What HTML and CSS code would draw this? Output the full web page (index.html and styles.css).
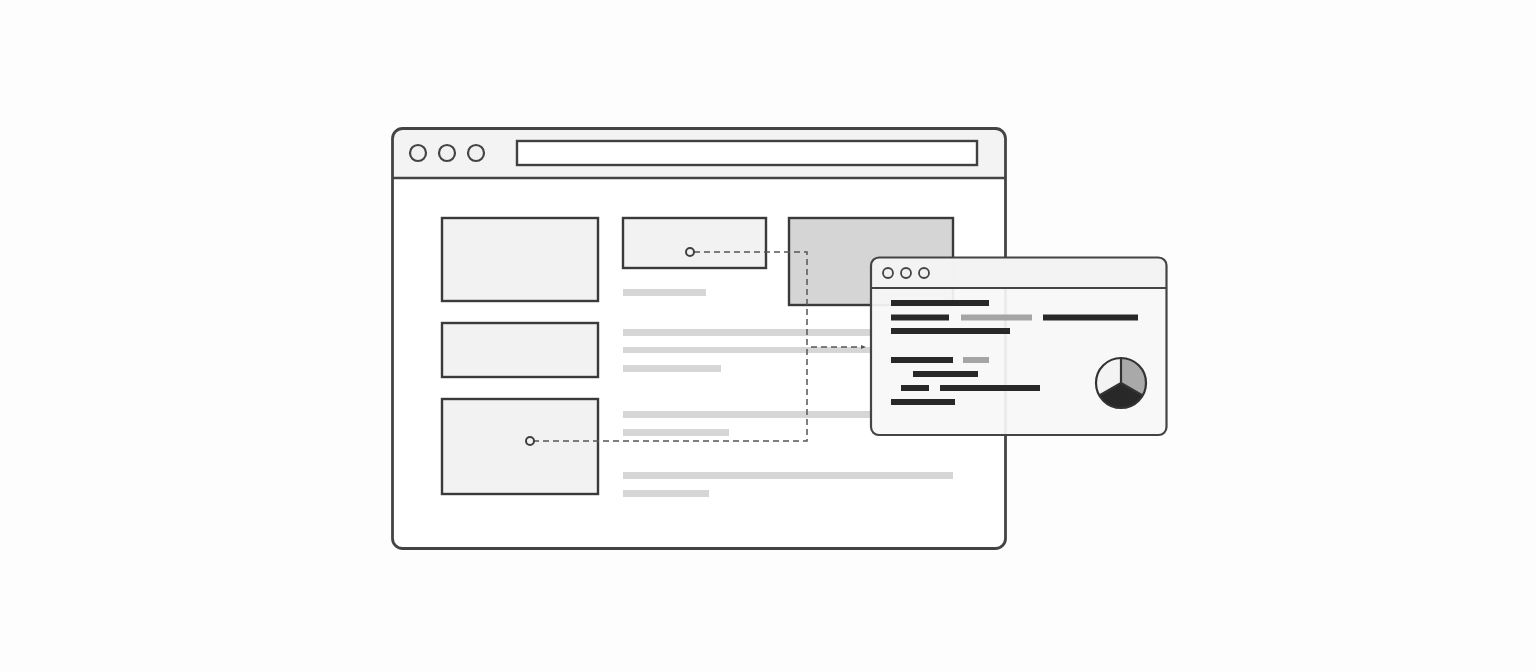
FILE: index.html
```html
<!DOCTYPE html>
<html lang="en">
<head>
<meta charset="utf-8">
<title>Wireframe illustration</title>
<link rel="stylesheet" href="styles.css">
</head>
<body>
<main class="stage">
<svg class="art" viewBox="0 0 1536 672" width="1536" height="672" xmlns="http://www.w3.org/2000/svg">
  <!-- main browser window -->
  <g class="win">
    <rect class="win-body" x="392.5" y="128.5" width="613" height="420" rx="10"/>
    <path class="win-bar" d="M402.5 128.5 H995.5 A10 10 0 0 1 1005.5 138.5 V178 H392.5 V138.5 A10 10 0 0 1 402.5 128.5 Z"/>
    <line class="win-line" x1="392.5" y1="178" x2="1005.5" y2="178"/>
    <rect class="win-outline" x="392.5" y="128.5" width="613" height="420" rx="10"/>
    <circle class="dot" cx="418" cy="153" r="8"/>
    <circle class="dot" cx="447" cy="153" r="8"/>
    <circle class="dot" cx="476" cy="153" r="8"/>
    <rect class="addr" x="517" y="141" width="460" height="24"/>

    <rect class="box" x="442" y="218" width="156" height="83"/>
    <rect class="box" x="442" y="323" width="156" height="54"/>
    <rect class="box" x="442" y="399" width="156" height="95"/>
    <rect class="box" x="623" y="218" width="143" height="50"/>
    <rect class="box box-dark" x="789" y="218" width="164" height="87"/>

    <rect class="gl" x="623" y="289" width="83" height="7"/>
    <rect class="gl" x="623" y="329" width="250" height="7"/>
    <rect class="gl" x="623" y="347" width="250" height="6"/>
    <rect class="gl" x="623" y="365" width="98" height="7"/>
    <rect class="gl" x="623" y="411" width="250" height="7"/>
    <rect class="gl" x="623" y="429" width="106" height="7"/>
    <rect class="gl" x="623" y="472" width="330" height="7"/>
    <rect class="gl" x="623" y="490" width="86" height="7"/>

    <path class="dash" d="M694 252 H807 V441 H534"/>
    <path class="dash" d="M811 347 H864"/>
    <path class="tip" d="M861 345 L866 347 L861 349 Z"/>
    <circle class="node" cx="690" cy="252" r="4"/>
    <circle class="node" cx="530" cy="441" r="4"/>
  </g>

  <!-- popup window -->
  <g class="pop">
    <rect class="pop-body" x="871" y="257.5" width="295.5" height="177.5" rx="8"/>
    <path class="pop-bar" d="M879 257.5 H1158.5 A8 8 0 0 1 1166.5 265.5 V288 H871 V265.5 A8 8 0 0 1 879 257.5 Z"/>
    <line class="pop-line" x1="871" y1="288" x2="1166.5" y2="288"/>
    <rect class="pop-outline" x="871" y="257.5" width="295.5" height="177.5" rx="8"/>
    <circle class="pdot" cx="888" cy="273" r="5"/>
    <circle class="pdot" cx="906" cy="273" r="5"/>
    <circle class="pdot" cx="924" cy="273" r="5"/>

    <rect class="db" x="891" y="300" width="98" height="6"/>
    <rect class="db" x="891" y="314.5" width="58" height="6"/>
    <rect class="mb" x="961" y="314.5" width="71" height="6"/>
    <rect class="db" x="1043" y="314.5" width="95" height="6"/>
    <rect class="db" x="891" y="328" width="119" height="6"/>
    <rect class="db" x="891" y="357" width="62" height="6"/>
    <rect class="mb" x="963" y="357" width="26" height="6"/>
    <rect class="db" x="913" y="371" width="65" height="6"/>
    <rect class="db" x="901" y="385" width="28" height="6"/>
    <rect class="db" x="940" y="385" width="100" height="6"/>
    <rect class="db" x="891" y="399" width="64" height="6"/>

    <g class="pie">
      <path class="p-light" d="M1121 383 L1099.35 395.5 A25 25 0 0 1 1121 358 Z"/>
      <path class="p-mid" d="M1121 383 L1121 358 A25 25 0 0 1 1142.65 395.5 Z"/>
      <path class="p-dark" d="M1121 383 L1142.65 395.5 A25 25 0 0 1 1099.35 395.5 Z"/>
      <circle class="p-ring" cx="1121" cy="383" r="25"/>
      <path class="p-spokes" d="M1121 358 V383 L1142.65 395.5 M1121 383 L1099.35 395.5"/>
    </g>
  </g>
</svg>
</main>
</body>
</html>
```

FILE: styles.css
```css
html, body {
  margin: 0;
  padding: 0;
  background: #fdfdfd;
  font-family: "Liberation Sans", Arial, sans-serif;
}
.stage {
  width: 1536px;
  height: 672px;
  overflow: hidden;
}
.art {
  display: block;
}
.win-body { fill: #ffffff; }
.win-bar { fill: #f3f3f3; }
.win-line { stroke: #444; stroke-width: 2.5; }
.win-outline { fill: none; stroke: #444; stroke-width: 2.8; }
.dot { fill: #f1f1f1; stroke: #444; stroke-width: 2.2; }
.addr { fill: #ffffff; stroke: #404040; stroke-width: 2.4; }
.box { fill: #f2f2f2; stroke: #3a3a3a; stroke-width: 2.4; }
.box-dark { fill: #d5d5d5; }
.gl { fill: #d6d6d6; }
.dash { fill: none; stroke: #555; stroke-width: 1.5; stroke-dasharray: 6 4; }
.tip { fill: #555; }
.node { fill: #f4f4f4; stroke: #404040; stroke-width: 2; }

.pop-body { fill: rgba(247, 247, 247, 0.93); }
.pop-bar { fill: rgba(242, 242, 242, 0.94); }
.pop-line { stroke: #444; stroke-width: 2.2; }
.pop-outline { fill: none; stroke: #444; stroke-width: 2.2; }
.pdot { fill: #f1f1f1; stroke: #444; stroke-width: 1.8; }
.db { fill: #282828; }
.mb { fill: #a5a5a5; }
.p-light { fill: #f3f3f3; }
.p-mid { fill: #a9a9a9; }
.p-dark { fill: #282828; }
.p-ring { fill: none; stroke: #333; stroke-width: 2.2; }
.p-spokes { fill: none; stroke: #333; stroke-width: 2.2; }
```
